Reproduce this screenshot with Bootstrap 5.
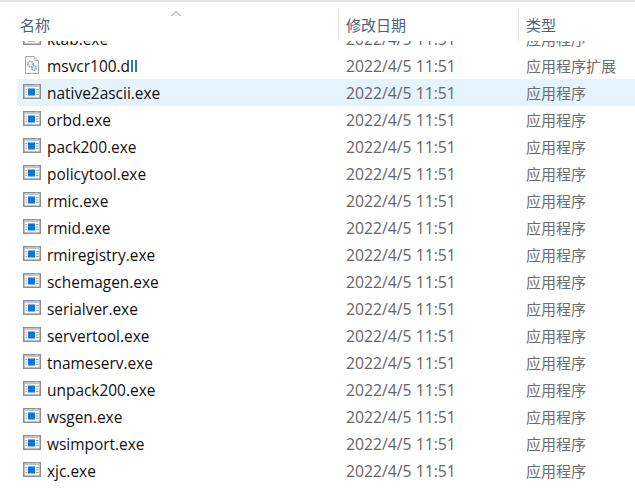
<!DOCTYPE html>
<html lang="zh">
<head>
<meta charset="utf-8">
<title>文件列表</title>
<link href="https://cdn.jsdelivr.net/npm/bootstrap@5.3.0/dist/css/bootstrap.min.css" rel="stylesheet">
<style>
html, body { height: 100%; overflow: hidden; background: #fff; }
body { font-family: "Open Sans", "Noto Sans CJK SC", sans-serif; font-size: 15px; }
.explorer { height: 495px; border-top: 2px solid #e3e3e3; padding-top: 7px; }
.head-row { height: 32px; position: relative; z-index: 2; background: #fff; color: #4c607a; }
.c-name { width: 338px; padding-left: 20px; flex: none; }
.c-date { width: 180px; padding-left: 8px; flex: none; }
.c-type { flex: 1 1 auto; padding-left: 8px; white-space: nowrap; }
.head-row .c-date, .head-row .c-type { border-left: 1px solid #e5e5e5; padding-left: 7px; }
.sort-mark { position: absolute; left: 170px; top: 1px; }
.file-list { height: 445px; overflow: hidden; }
.file-items { margin-top: -16px; }
.file-row { height: 27px; margin-left: 17px; color: #666; }
.file-row .c-name { width: 321px; padding-left: 6px; color: #111; display: flex; align-items: center; gap: 6px; }
.file-row .c-name span { font-size: 15.45px; padding-top: 2px; }
.file-row .c-date { font-size: 15.75px; padding-top: 2px; }
.file-row .c-type { padding-top: 2px; color: #6d6d6d; }
.file-row.hot { background: #e5f3ff; }
.ficon { width: 18px; height: 18px; flex: none; }
</style>
</head>
<body>
<svg width="0" height="0" class="d-block">
  <defs>
    <symbol id="exe" viewBox="0 0 18 18">
      <rect x="0" y="1" width="18" height="15" fill="#8e8e8e"/>
      <rect x="1.5" y="2.5" width="15" height="12" fill="#f6f6f6"/>
      <rect x="1.5" y="2.5" width="15" height="1.5" fill="#b8c8d8"/>
      <path d="M12.5 2h1M14.5 2h1" stroke="#d8d8d8"/>
      <rect x="5" y="5.5" width="7" height="7" fill="#0878d8"/>
      <path d="M13 6.5h2.5M13 9h2.5M13 11.500h2.500M2.500 6.500h1.500M2.500 9h1.500M2.500 11.500h1.500" stroke="#a6a6a6"/>
    </symbol>
    <symbol id="dll" viewBox="0 0 18 18">
      <path d="M2.500.500h9l4 4v13h-13z" fill="#fafafa" stroke="#a8a8a8"/>
      <path d="M11.500.500v4h4" fill="#eee" stroke="#c0c0c0"/>
      <circle cx="7.500" cy="8" r="2.700" fill="#eee" stroke="#a2a2a2" stroke-width="1.600" stroke-dasharray="1.500 .7"/>
      <circle cx="11" cy="12" r="2.300" fill="#e4eef7" stroke="#7aa6cf" stroke-width="1.600" stroke-dasharray="1.500 .7"/>
    </symbol>
  </defs>
</svg>
<main class="explorer">
  <div class="head-row d-flex align-items-center">
    <div class="c-name h-100 d-flex align-items-center">名称</div>
    <svg class="sort-mark" width="12" height="8" viewBox="0 0 12 8"><path d="M1.500 6 6 1.500 10.500 6" fill="none" stroke="#8a8a8a"/></svg>
    <div class="c-date h-100 d-flex align-items-center">修改日期</div>
    <div class="c-type h-100 d-flex align-items-center">类型</div>
  </div>
  <div class="file-list">
    <div class="file-items">
      <div class="file-row d-flex align-items-center"><div class="c-name"><svg class="ficon"><use href="#exe"/></svg><span>ktab.exe</span></div><div class="c-date">2022/4/5 11:51</div><div class="c-type">应用程序</div></div>
      <div class="file-row d-flex align-items-center"><div class="c-name"><svg class="ficon"><use href="#dll"/></svg><span>msvcr100.dll</span></div><div class="c-date">2022/4/5 11:51</div><div class="c-type">应用程序扩展</div></div>
      <div class="file-row hot d-flex align-items-center"><div class="c-name"><svg class="ficon"><use href="#exe"/></svg><span>native2ascii.exe</span></div><div class="c-date">2022/4/5 11:51</div><div class="c-type">应用程序</div></div>
      <div class="file-row d-flex align-items-center"><div class="c-name"><svg class="ficon"><use href="#exe"/></svg><span>orbd.exe</span></div><div class="c-date">2022/4/5 11:51</div><div class="c-type">应用程序</div></div>
      <div class="file-row d-flex align-items-center"><div class="c-name"><svg class="ficon"><use href="#exe"/></svg><span>pack200.exe</span></div><div class="c-date">2022/4/5 11:51</div><div class="c-type">应用程序</div></div>
      <div class="file-row d-flex align-items-center"><div class="c-name"><svg class="ficon"><use href="#exe"/></svg><span>policytool.exe</span></div><div class="c-date">2022/4/5 11:51</div><div class="c-type">应用程序</div></div>
      <div class="file-row d-flex align-items-center"><div class="c-name"><svg class="ficon"><use href="#exe"/></svg><span>rmic.exe</span></div><div class="c-date">2022/4/5 11:51</div><div class="c-type">应用程序</div></div>
      <div class="file-row d-flex align-items-center"><div class="c-name"><svg class="ficon"><use href="#exe"/></svg><span>rmid.exe</span></div><div class="c-date">2022/4/5 11:51</div><div class="c-type">应用程序</div></div>
      <div class="file-row d-flex align-items-center"><div class="c-name"><svg class="ficon"><use href="#exe"/></svg><span>rmiregistry.exe</span></div><div class="c-date">2022/4/5 11:51</div><div class="c-type">应用程序</div></div>
      <div class="file-row d-flex align-items-center"><div class="c-name"><svg class="ficon"><use href="#exe"/></svg><span>schemagen.exe</span></div><div class="c-date">2022/4/5 11:51</div><div class="c-type">应用程序</div></div>
      <div class="file-row d-flex align-items-center"><div class="c-name"><svg class="ficon"><use href="#exe"/></svg><span>serialver.exe</span></div><div class="c-date">2022/4/5 11:51</div><div class="c-type">应用程序</div></div>
      <div class="file-row d-flex align-items-center"><div class="c-name"><svg class="ficon"><use href="#exe"/></svg><span>servertool.exe</span></div><div class="c-date">2022/4/5 11:51</div><div class="c-type">应用程序</div></div>
      <div class="file-row d-flex align-items-center"><div class="c-name"><svg class="ficon"><use href="#exe"/></svg><span>tnameserv.exe</span></div><div class="c-date">2022/4/5 11:51</div><div class="c-type">应用程序</div></div>
      <div class="file-row d-flex align-items-center"><div class="c-name"><svg class="ficon"><use href="#exe"/></svg><span>unpack200.exe</span></div><div class="c-date">2022/4/5 11:51</div><div class="c-type">应用程序</div></div>
      <div class="file-row d-flex align-items-center"><div class="c-name"><svg class="ficon"><use href="#exe"/></svg><span>wsgen.exe</span></div><div class="c-date">2022/4/5 11:51</div><div class="c-type">应用程序</div></div>
      <div class="file-row d-flex align-items-center"><div class="c-name"><svg class="ficon"><use href="#exe"/></svg><span>wsimport.exe</span></div><div class="c-date">2022/4/5 11:51</div><div class="c-type">应用程序</div></div>
      <div class="file-row d-flex align-items-center"><div class="c-name"><svg class="ficon"><use href="#exe"/></svg><span>xjc.exe</span></div><div class="c-date">2022/4/5 11:51</div><div class="c-type">应用程序</div></div>
    </div>
  </div>
</main>
<script src="https://cdn.jsdelivr.net/npm/bootstrap@5.3.0/dist/js/bootstrap.bundle.min.js"></script>
</body>
</html>
